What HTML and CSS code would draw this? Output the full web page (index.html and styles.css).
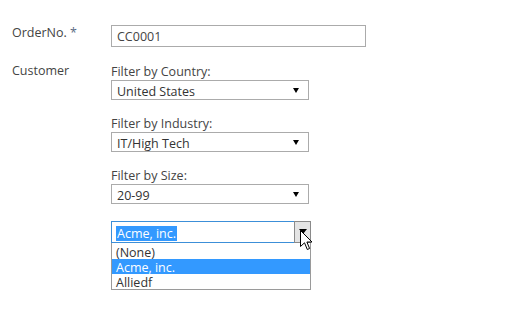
FILE: index.html
```html
<!DOCTYPE html>
<html lang="en">
<head>
    <meta charset="UTF-8">
    <title>New Order</title>
    <link rel="stylesheet" href="styles.css">
</head>
<body>
    <div class="form">
        <div class="row row-order">
            <div class="label">OrderNo. <span class="req">*</span></div>
            <div class="field">
                <div class="textbox">CC0001</div>
            </div>
        </div>

        <div class="row row-customer">
            <div class="label">Customer</div>
            <div class="field">
                <div class="filter">
                    <div class="filter-label">Filter by Country:</div>
                    <div class="select">United States<span class="arrow"></span></div>
                </div>
                <div class="filter">
                    <div class="filter-label">Filter by Industry:</div>
                    <div class="select">IT/High Tech<span class="arrow"></span></div>
                </div>
                <div class="filter">
                    <div class="filter-label">Filter by Size:</div>
                    <div class="select">20-99<span class="arrow"></span></div>
                </div>

                <!-- Customer lookup, opened -->
                <div class="combo">
                    <div class="combo-box">
                        <div class="combo-input"><span class="selected-text">Acme, inc.</span></div>
                        <div class="combo-btn"><span class="arrow"></span></div>
                    </div>
                    <ul class="combo-list">
                        <li>(None)</li>
                        <li class="active">Acme, inc.</li>
                        <li>Alliedf</li>
                    </ul>
                    <svg class="cursor" width="13" height="21" viewBox="0 0 13 21">
                        <path d="M0.5 0.5 L0.5 16.5 L4.5 12.8 L7.3 19.5 L9.6 18.5 L6.9 12 L12 12 Z" fill="#fff" stroke="#000" stroke-width="1" stroke-linejoin="miter"/>
                    </svg>
                </div>
            </div>
        </div>
    </div>
</body>
</html>
```

FILE: styles.css
```css
* {
    margin: 0;
    padding: 0;
    box-sizing: border-box;
}

body {
    background: #fff;
    color: #444;
    font-family: 'Open Sans', 'Noto Sans', sans-serif;
    font-size: 12.5px;
}

.form {
    padding: 25px 0 0 12px;
}

.row {
    display: flex;
}

.row-customer {
    margin-top: 15px;
}

.label {
    width: 99px;
    line-height: 18px;
}

.row-order .label {
    line-height: 16px;
}

.req {
    color: #5a6b84;
}

.textbox {
    width: 255px;
    height: 22px;
    border: 1px solid #ababab;
    padding: 1px 0 0 5px;
    line-height: 20px;
    color: #444;
}

/* Filters */
.filter + .filter {
    margin-top: 14px;
}

.filter-label {
    line-height: 18px;
    padding-top: 1px;
    height: 18px;
}

.select {
    position: relative;
    width: 198px;
    height: 20px;
    border: 1px solid #ababab;
    padding: 2px 0 0 5px;
    line-height: 17px;
    color: #333;
}

.arrow {
    position: absolute;
    width: 0;
    height: 0;
    border-left: 3px solid transparent;
    border-right: 3px solid transparent;
    border-top: 5px solid #000;
}

.select .arrow {
    right: 9px;
    top: 7px;
}

/* Customer combo */
.combo {
    position: relative;
    margin-top: 17px;
    width: 200px;
}

.combo-box {
    display: flex;
    height: 22px;
}

.combo-input {
    flex: 1;
    border: 1px solid #3c8fd8;
    border-right: none;
    padding: 3px 0 0 4px;
}

.selected-text {
    display: inline-block;
    background: #3399ff;
    color: #fff;
    line-height: 15px;
    padding: 0 1px;
}

.combo-btn {
    position: relative;
    width: 17px;
    border: 1px solid #8a8a8a;
    background: #e4e4e4;
}

.combo-btn .arrow {
    left: 4px;
    top: 7px;
    border-left-width: 4px;
    border-right-width: 4px;
    border-top-width: 5px;
}

.combo-list {
    list-style: none;
    border: 1px solid #9a9a9a;
    border-top: none;
    padding-top: 1px;
}

.combo-list li {
    height: 15px;
    line-height: 15px;
    padding: 1px 0 0 4px;
    color: #333;
}

.combo-list li.active {
    background: #3399ff;
    color: #fff;
}

.cursor {
    position: absolute;
    left: 189px;
    top: 9px;
}
```
